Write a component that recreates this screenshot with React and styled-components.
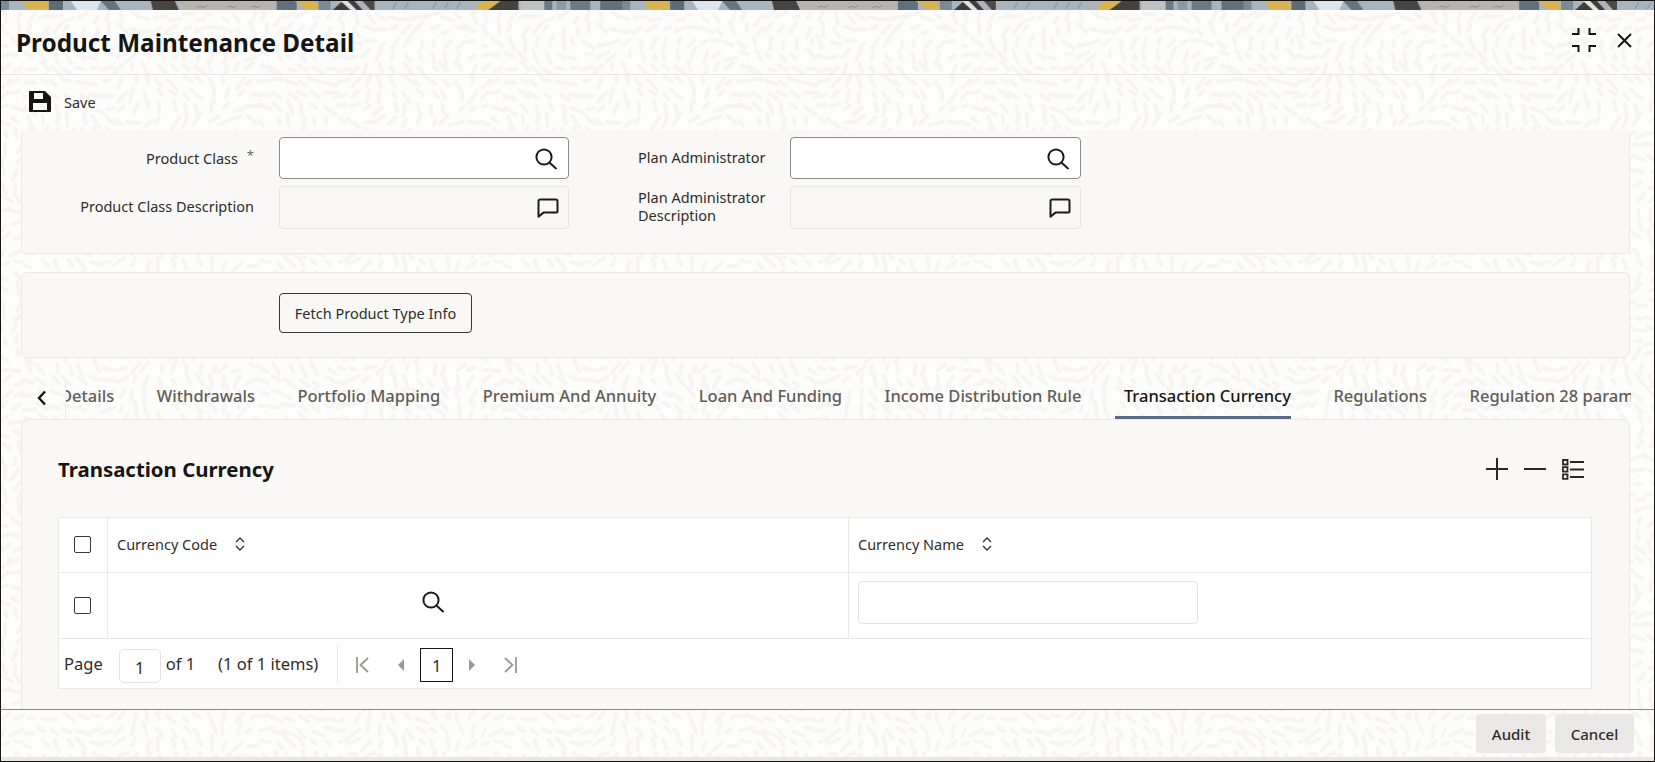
import React from 'react'
import styled, { createGlobalStyle } from 'styled-components'

// rice-grain wallpaper, built once as a seamless svg tile
const buildGrainTile = () => {
  const size = 480
  const step = 13
  let seed = 7
  const rnd = () => {
    seed = (seed * 16807) % 2147483647
    return seed / 2147483647
  }
  let lines = ''
  for (let y = 0; y < size - 1; y += step) {
    for (let x = 0; x < size - 1; x += step) {
      const px = x + rnd() * 6
      const py = y + rnd() * 6
      const angle =
        Math.sin((px / size) * Math.PI * 4) * 1.5 +
        Math.cos((py / size) * Math.PI * 6) * 1.3 +
        rnd() * 0.5
      const len = 2.5 + rnd() * 4.5
      const dx = Math.cos(angle) * len
      const dy = Math.sin(angle) * len
      lines += `<path d="M${(px - dx).toFixed(1)} ${(py - dy).toFixed(1)}L${(px + dx).toFixed(1)} ${(py + dy).toFixed(1)}"/>`
    }
  }
  const svg = `<svg xmlns="http://www.w3.org/2000/svg" width="${size}" height="${size}"><g stroke="#f6f5f3" stroke-width="4" stroke-linecap="round" fill="none">${lines}</g></svg>`
  return `url("data:image/svg+xml,${encodeURIComponent(svg)}")`
}

const grainTile = buildGrainTile()

const GlobalStyle = createGlobalStyle`
  html, body {
    margin: 0;
    padding: 0;
    background: #fff;
  }
  * {
    box-sizing: border-box;
  }
  body {
    font-family: "Noto Sans", "Open Sans", sans-serif;
    color: #2f2d2a;
  }
`

const Window = styled.div`
  width: 1655px;
  height: 762px;
  display: flex;
  flex-direction: column;
  overflow: hidden;
  border: 1px solid #161513;
  background-color: #fdfdfc;
  background-image: ${grainTile};
`

const Band = styled.svg`
  display: block;
  flex: none;
  width: 100%;
  height: 9px;
`

const Header = styled.header`
  flex: none;
  height: 65px;
  display: flex;
  align-items: center;
  justify-content: space-between;
  padding: 0 22px 0 15px;
  border-bottom: 1px solid #e6e5e3;
`

const Title = styled.h1`
  margin: 0;
  font-size: 24.3px;
  font-weight: 700;
  color: #161513;
`

const WindowActions = styled.div`
  display: flex;
  align-items: center;
  gap: 21px;
  margin-bottom: 4px;
`

const Toolbar = styled.div`
  flex: none;
  height: 55px;
  display: flex;
  align-items: center;
  gap: 13px;
  padding: 0 0 2px 28px;
  font-size: 14.5px;
  color: #2f2d2a;
`

const Panel = styled.section`
  flex: none;
  margin: 0 24px 0 20px;
  background: #f9f8f6;
  border: 1px solid #eceae8;
  border-radius: 6px;
`

const FormPanel = styled(Panel)`
  height: 124px;
  padding-top: 6px;
  border-top-color: transparent;
`

const FormGrid = styled.div`
  display: grid;
  grid-template-columns: 257px 290px 221px 291px;
  grid-template-rows: 42px 43px;
  row-gap: 7px;
`

const FieldLabel = styled.label`
  align-self: center;
  font-size: 14.5px;
  line-height: 18px;
  color: #2f2d2a;
  text-align: ${p => (p.$left ? 'left' : 'right')};
  padding: ${p => (p.$left ? '0 10px 3px 69px' : '0 25px 3px 0')};
`

const Required = styled.span`
  display: inline-block;
  width: 16px;
  text-align: right;
  font-size: 13px;
  color: #6a6864;
  vertical-align: 4px;
`

const InputBox = styled.div`
  display: flex;
  align-items: center;
  justify-content: flex-end;
  padding-right: ${p => (p.$readOnly ? 9 : 11)}px;
  border-radius: 4px;
  background: ${p => (p.$readOnly ? 'transparent' : '#fff')};
  border: 1px solid ${p => (p.$readOnly ? '#e6e5e3' : '#8c8a86')};
`

const ActionPanel = styled(Panel)`
  height: 86px;
  margin-top: 18px;
  padding: 20px 0 0 257px;
`

const OutlineButton = styled.button`
  height: 40px;
  width: 193px;
  padding: 0;
  background: #fff0;
  border: 1px solid #3a3835;
  border-radius: 4px;
  font: 400 14.5px "Noto Sans", sans-serif;
  color: #2f2d2a;
`

const TabBar = styled.nav`
  flex: none;
  height: 61px;
  margin: 0 23px 0 21px;
  display: flex;
  align-items: flex-end;
`

const ChevronCell = styled.div`
  flex: none;
  width: 44px;
  height: 38px;
  display: flex;
  align-items: flex-start;
  justify-content: center;
  padding: 9px 3px 0 0;
  border-right: 1px solid #eceae8;
`

const TabViewport = styled.div`
  flex: 1;
  min-width: 0;
  overflow: hidden;
`

const TabStrip = styled.div`
  display: flex;
  margin-left: -15px;
  white-space: nowrap;
`

const Tab = styled.div`
  flex: none;
  height: 40px;
  margin-right: 33.5px;
  padding: 6px 0 0 9px;
  font-size: 16.5px;
  font-weight: 500;
  line-height: 22px;
  color: ${p => (p.$active ? '#161513' : '#5f5c58')};
  border-bottom: 3px solid ${p => (p.$active ? '#5a6a86' : 'transparent')};
`

const ContentPanel = styled(Panel)`
  flex: 1;
  min-height: 0;
  overflow: hidden;
  padding: 0 37px 0 36px;
  border-bottom: none;
  border-radius: 8px 8px 0 0;
`

const SectionHead = styled.div`
  height: 97px;
  padding: 1px 8px 0 0;
  display: flex;
  align-items: center;
  justify-content: space-between;
`

const SectionTitle = styled.h2`
  margin: 0;
  font-size: 20.4px;
  font-weight: 700;
  color: #161513;
`

const SectionActions = styled.div`
  display: flex;
  align-items: center;
  gap: 16px;
`

const Table = styled.div`
  background: #fff;
  border: 1px solid #e9e8e6;
`

const Row = styled.div`
  display: grid;
  grid-template-columns: 49px 741px 1fr;
  height: ${p => p.$height}px;
  border-bottom: 1px solid #e9e8e6;
`

const Cell = styled.div`
  display: flex;
  align-items: center;
  min-width: 0;
  padding-left: ${p => p.$pad || 0}px;
  padding-bottom: ${p => p.$lift || 0}px;
  border-right: ${p => (p.$last ? 'none' : '1px solid #e9e8e6')};
`

const CheckCell = styled(Cell)`
  justify-content: center;
  padding-right: 2px;
`

const HeadText = styled.span`
  font-size: 14.5px;
  font-weight: 400;
  color: #2f2d2a;
  margin-right: 18px;
`

const Check = styled.span`
  display: block;
  width: 17px;
  height: 17px;
  border: 1.5px solid #3a3835;
  border-radius: 2px;
  background: #fff;
`

const LookupCell = styled(Cell)`
  padding: 0 0 8px 313px;
`

const TextInput = styled.div`
  width: 340px;
  height: 43px;
  margin-bottom: 6px;
  background: #fff;
  border: 1px solid #e3e2e0;
  border-radius: 4px;
`

const Pager = styled.div`
  height: 49px;
  display: flex;
  align-items: center;
  padding-left: 5px;
  font-size: 16.5px;
  color: #2f2d2a;
`

const PageInput = styled.span`
  width: 42px;
  height: 34px;
  margin: 5px 5px 0 16px;
  display: flex;
  align-items: center;
  justify-content: center;
  padding-top: 3px;
  background: #fff;
  border: 1px solid #e3e2e0;
  border-radius: 5px;
`

const ItemCount = styled.span`
  margin-left: 23px;
`

const PagerDivider = styled.span`
  width: 1px;
  height: 38px;
  margin: 0 18px 0 19px;
  background: #e9e8e6;
`

const PagerControls = styled.div`
  display: flex;
  align-items: center;
  padding-top: 2px;
`

const PageNumber = styled.span`
  width: 33px;
  height: 34px;
  margin: 0 16px;
  display: flex;
  align-items: center;
  justify-content: center;
  padding-top: 2px;
  border: 1px solid #161513;
`

const Footer = styled.footer`
  flex: none;
  height: 52px;
  display: flex;
  justify-content: flex-end;
  gap: 9px;
  padding: 4px 20px 0 0;
  border-top: 1px solid #8a8884;
  border-bottom: 4px solid #e8e7e5;
`

const FooterButton = styled.button`
  width: ${p => p.$width}px;
  height: 39px;
  padding: 0;
  border: none;
  border-radius: 4px;
  background: #e9e8e6;
  font: 500 15px "Noto Sans", sans-serif;
  color: #2f2d2a;
`

const Svg = styled.svg`
  display: block;
  flex: none;
  transform: ${p => (p.$flip ? 'scaleX(-1)' : 'none')};
`

const SearchIcon = () => (
  <Svg width="23" height="23" viewBox="0 0 23 23" fill="none" stroke="#1d1b19" strokeWidth="2">
    <circle cx="10" cy="10" r="7.6" />
    <path d="M15.4 15.4 22 21.4" strokeLinecap="round" />
  </Svg>
)

const CommentIcon = () => (
  <Svg width="22" height="20" viewBox="0 0 22 20" fill="none" stroke="#1d1b19" strokeWidth="2" strokeLinejoin="round">
    <path d="M1.5 3a1.6 1.6 0 0 1 1.6-1.6h15.8A1.6 1.6 0 0 1 20.5 3v10a1.6 1.6 0 0 1-1.6 1.6H6.5L1.5 18.6z" />
  </Svg>
)

const SaveIcon = () => (
  <Svg width="22" height="21" viewBox="0 0 22 21">
    <path
      fillRule="evenodd"
      fill="#161513"
      d="M1 0h15l6 6v14a1 1 0 0 1-1 1H1a1 1 0 0 1-1-1V1a1 1 0 0 1 1-1zm4 2v6h9V2zM4 12v7h14v-7z"
    />
  </Svg>
)

const CollapseIcon = () => (
  <Svg width="24" height="24" viewBox="0 0 24 24" fill="none" stroke="#161513" strokeWidth="2">
    <path d="M0 6h6.5V0M24 6h-6.5V0M0 18h6.5v6M24 18h-6.5v6" />
  </Svg>
)

const CloseIcon = () => (
  <Svg width="15" height="15" viewBox="0 0 15 15" fill="none" stroke="#161513" strokeWidth="2">
    <path d="M1 1l13 13M14 1 1 14" />
  </Svg>
)

const PlusIcon = () => (
  <Svg width="22" height="22" viewBox="0 0 22 22" fill="none" stroke="#2a2825" strokeWidth="2">
    <path d="M0 11h22M11 0v22" />
  </Svg>
)

const MinusIcon = () => (
  <Svg width="22" height="22" viewBox="0 0 22 22" fill="none" stroke="#2a2825" strokeWidth="2">
    <path d="M0 11h22" />
  </Svg>
)

const ListIcon = () => (
  <Svg width="22" height="21" viewBox="0 0 22 21" fill="none" stroke="#2a2825" strokeWidth="2">
    <path d="M8 3h14M8 10.5h14M8 18h14" />
    <path d="M1 1h4.5v4.5H1zM1 8.2h4.5v4.5H1zM1 15.4h4.5v4.5H1z" strokeWidth="1.8" />
  </Svg>
)

const SortIcon = () => (
  <Svg width="10" height="14" viewBox="0 0 10 14" fill="none" stroke="#3a3835" strokeWidth="1.4">
    <path d="M1 5l4-4 4 4M1 9l4 4 4-4" />
  </Svg>
)

const BackChevron = () => (
  <Svg width="10" height="16" viewBox="0 0 10 16" fill="none" stroke="#161513" strokeWidth="2.4">
    <path d="M8 1.5 2 8l6 6.5" />
  </Svg>
)

const PagerEdge = ({ flip }) => (
  <Svg $flip={flip} width="13" height="16" viewBox="0 0 13 16" fill="none" stroke="#9a9894" strokeWidth="1.8">
    <path d="M1 0v16M12 1 4.5 8l7.5 7" />
  </Svg>
)

const PagerStep = ({ flip }) => (
  <Svg $flip={flip} width="6" height="12" viewBox="0 0 6 12">
    <path d="M6 0v12L0 6z" fill="#9a9894" />
  </Svg>
)

const PagerGap = styled.span`
  display: block;
  width: ${p => p.$width}px;
`

// one repeat of the banner artwork, cut to a thin strip
const BandArt = () => (
  <Band viewBox="0 0 1655 9" preserveAspectRatio="none">
    <defs>
      <pattern id="bandTile" width="622" height="9" patternUnits="userSpaceOnUse">
        <rect width="622" height="9" fill="#a9b4be" />
        <rect x="0" width="8" height="9" fill="#7c8a96" />
        <path d="M22 0h23l4 9H26z" fill="#d9b44f" />
        <rect x="48" width="14" height="9" fill="#5c6b78" />
        <path d="M70 0h30l-4 9H76z" fill="#dde6ee" />
        <path d="M100 0h14l6 9h-12z" fill="#66747f" />
        <path d="M150 0h24l4 9h-26z" fill="#474441" />
        <rect x="178" width="98" height="9" fill="#b9b4ae" />
        <path d="M196 7c4-5 6 3 10-3M226 7c4-5 6 3 10-3M250 7c4-5 6 3 10-3" stroke="#8f8a84" fill="none" />
        <rect x="276" width="20" height="9" fill="#60707d" />
        <path d="M294 0h20l6 9h-14z" fill="#d9b44f" />
        <rect x="318" width="12" height="9" fill="#7c8a96" />
        <path d="M332 9 342 0h12l8 9z" fill="#3f3d3a" />
        <path d="M340 0h7l9 9h-6z" fill="#dfe2e4" />
        <path d="M362 0h12v9h-4z" fill="#4c4a47" />
        <path d="M392 8l4-7M404 8l4-7M432 8l4-7M444 8l4-7M456 8l4-7" stroke="#7f8b96" fill="none" />
        <path d="M482 0h18l-12 9h-14z" fill="#d9b44f" />
        <path d="M500 0h18v9h-30z" fill="#44423f" />
        <rect x="520" width="24" height="9" fill="#bcc2c6" />
        <rect x="544" width="8" height="9" fill="#6c7a86" />
        <rect x="556" width="10" height="9" fill="#8d99a3" />
        <rect x="570" width="20" height="9" fill="#6c7a86" />
        <rect x="600" width="22" height="9" fill="#60707d" />
      </pattern>
    </defs>
    <rect width="1655" height="9" fill="url(#bandTile)" />
  </Band>
)

const tabs = [
  'Details',
  'Withdrawals',
  'Portfolio Mapping',
  'Premium And Annuity',
  'Loan And Funding',
  'Income Distribution Rule',
  'Transaction Currency',
  'Regulations',
  'Regulation 28 parameters'
]

const App = () => (
  <>
    <GlobalStyle />
    <Window>
      <BandArt />
      <Header>
        <Title>Product Maintenance Detail</Title>
        <WindowActions>
          <CollapseIcon />
          <CloseIcon />
        </WindowActions>
      </Header>
      <Toolbar>
        <SaveIcon />
        Save
      </Toolbar>
      <FormPanel>
        <FormGrid>
          <FieldLabel>
            Product Class
            <Required>*</Required>
          </FieldLabel>
          <InputBox>
            <SearchIcon />
          </InputBox>
          <FieldLabel $left>Plan Administrator</FieldLabel>
          <InputBox>
            <SearchIcon />
          </InputBox>
          <FieldLabel>Product Class Description</FieldLabel>
          <InputBox $readOnly>
            <CommentIcon />
          </InputBox>
          <FieldLabel $left>Plan Administrator Description</FieldLabel>
          <InputBox $readOnly>
            <CommentIcon />
          </InputBox>
        </FormGrid>
      </FormPanel>
      <ActionPanel>
        <OutlineButton>Fetch Product Type Info</OutlineButton>
      </ActionPanel>
      <TabBar>
        <ChevronCell>
          <BackChevron />
        </ChevronCell>
        <TabViewport>
          <TabStrip>
            {tabs.map(tab => (
              <Tab key={tab} $active={tab === 'Transaction Currency'}>
                {tab}
              </Tab>
            ))}
          </TabStrip>
        </TabViewport>
      </TabBar>
      <ContentPanel>
        <SectionHead>
          <SectionTitle>Transaction Currency</SectionTitle>
          <SectionActions>
            <PlusIcon />
            <MinusIcon />
            <ListIcon />
          </SectionActions>
        </SectionHead>
        <Table>
          <Row $height={55}>
            <CheckCell $lift={2}>
              <Check />
            </CheckCell>
            <Cell $pad={9} $lift={2}>
              <HeadText>Currency Code</HeadText>
              <SortIcon />
            </Cell>
            <Cell $pad={9} $lift={2} $last>
              <HeadText>Currency Name</HeadText>
              <SortIcon />
            </Cell>
          </Row>
          <Row $height={66}>
            <CheckCell>
              <Check />
            </CheckCell>
            <LookupCell>
              <SearchIcon />
            </LookupCell>
            <Cell $pad={9} $last>
              <TextInput />
            </Cell>
          </Row>
          <Pager>
            Page
            <PageInput>1</PageInput>
            of 1
            <ItemCount>(1 of 1 items)</ItemCount>
            <PagerDivider />
            <PagerControls>
              <PagerEdge />
              <PagerGap $width={29} />
              <PagerStep />
              <PageNumber>1</PageNumber>
              <PagerStep flip />
              <PagerGap $width={29} />
              <PagerEdge flip />
            </PagerControls>
          </Pager>
        </Table>
      </ContentPanel>
      <Footer>
        <FooterButton $width={70}>Audit</FooterButton>
        <FooterButton $width={79}>Cancel</FooterButton>
      </Footer>
    </Window>
  </>
)

export default App
